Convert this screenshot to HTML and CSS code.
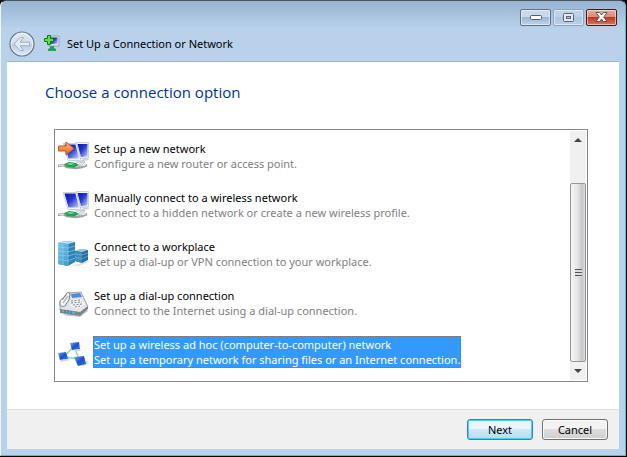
FILE: index.html
```
<!DOCTYPE html>
<html lang="en">
<head>
  <meta charset="UTF-8">
  <title>Set Up a Connection or Network</title>
  <link rel="stylesheet" href="styles.css">
</head>
<body>
  <!-- shared icon artwork -->
  <svg class="defs" width="0" height="0" aria-hidden="true">
    <defs>
      <linearGradient id="screen" x1="0" y1="0" x2="1" y2="1">
        <stop offset="0" stop-color="#0a16a0"/>
        <stop offset=".45" stop-color="#2336d2"/>
        <stop offset="1" stop-color="#c4d2fc"/>
      </linearGradient>
      <linearGradient id="orange" x1="0" y1="0" x2="0" y2="1">
        <stop offset="0" stop-color="#ffb67c"/>
        <stop offset="1" stop-color="#e8641a"/>
      </linearGradient>
      <linearGradient id="tower" x1="0" y1="0" x2="1" y2="1">
        <stop offset="0" stop-color="#7cc8ec"/>
        <stop offset="1" stop-color="#3c96cc"/>
      </linearGradient>
      <linearGradient id="node" x1="0" y1="0" x2="1" y2="1">
        <stop offset="0" stop-color="#7fb0f4"/>
        <stop offset=".5" stop-color="#1c50cc"/>
        <stop offset="1" stop-color="#3c76dc"/>
      </linearGradient>
      <linearGradient id="disc" x1="0" y1="0" x2="0" y2="1">
        <stop offset="0" stop-color="#dfe8f2"/>
        <stop offset=".48" stop-color="#d0dcea"/>
        <stop offset=".52" stop-color="#bccbdd"/>
        <stop offset="1" stop-color="#dde9f5"/>
      </linearGradient>
      <g id="computers">
        <path d="M18 2.500h12.500V18l-8 .5z" fill="#f0f2f8" stroke="#c4c8d6" stroke-width=".8"/>
        <path d="M19.500 4h10v12.500l-6.500.5z" fill="url(#screen)"/>
        <path d="M24 18h6l1 2-6 1z" fill="#cfd2d8"/>
        <path d="M5 3.500h13.500l4.500 17H10z" fill="#f4f6fb" stroke="#c0c5d4" stroke-width=".8"/>
        <path d="M6.500 4.500h11l3.500 14H10.500z" fill="url(#screen)"/>
        <path d="M17 21l8-1 2 2-8 1z" fill="#d2d5da"/>
        <path d="M0 26l5-1 4 2 9 1 6-1 5-2" fill="none" stroke="#9aa2a2" stroke-width="2.500"/>
        <path d="M1 25.500l5-.5M22 26l6-1" stroke="#eef1f1"/>
        <path d="M6 24l5-2 7 1 3 2-5 2.500-7-.5z" fill="#1ea352"/>
        <path d="M8 24l4-1 5 1-4 1z" fill="#7bdb9a"/>
        <path d="M20 25l5-4 2 1-4 4z" fill="#e5e9e9" stroke="#a0a8a8" stroke-width=".6"/>
      </g>
    </defs>
  </svg>

  <div class="window">
    <div class="caption">
      <div class="caption-buttons">
        <button class="cap-btn" aria-label="Minimize">
          <svg width="12" height="6" viewBox="0 0 12 6"><rect x=".5" y=".5" width="11" height="4" rx="1" fill="#fff" stroke="#565c6c"/></svg>
        </button>
        <button class="cap-btn cap-max" aria-label="Maximize" disabled>
          <svg width="11" height="10" viewBox="0 0 11 10"><rect x=".5" y=".5" width="10" height="8" rx="1" fill="#e4ebf4" stroke="#596277"/><rect x="3.500" y="3.500" width="4" height="2" fill="#b4c9e1" stroke="#596277"/></svg>
        </button>
        <button class="cap-btn cap-close" aria-label="Close">
          <svg width="13" height="11" viewBox="0 0 13 11"><path d="M1 .5h3.500l2 2.500 2-2.500H12L8.700 5l3.300 4.500H8.500l-2-2.500-2 2.500H1L4.300 5z" fill="#fff" stroke="#5b4448" stroke-width=".9"/></svg>
        </button>
      </div>
    </div>

    <div class="title-row">
      <button class="back" aria-label="Back" disabled>
        <svg width="26" height="26" viewBox="0 0 26 26">
          <circle cx="13" cy="13" r="12" fill="url(#disc)" stroke="#68778c" stroke-width="1.200"/>
          <circle cx="13" cy="13" r="10.800" fill="none" stroke="#f4f8fc" stroke-width=".8"/>
          <path d="M5 13l6.500-6.500h3L11 11.200h9.500v3.600H11l3.500 4.700h-3z" fill="#e3ebf4" stroke="#98a9bf" stroke-width=".9"/>
        </svg>
      </button>
      <svg class="title-icon" width="16" height="17" viewBox="0 0 16 17" aria-hidden="true">
        <path d="M3 1h12v10H5z" fill="#dce4e8" stroke="#8b97a3" stroke-width=".8"/>
        <path d="M6 2.500h7.500V9H6z" fill="url(#screen)"/>
        <path d="M0 15.500h16" stroke="#c4d0d2" stroke-width="2"/>
        <path d="M6 11h4v2l2 1v2H4v-2l2-1z" fill="#1aa660"/>
        <path d="M3.500.5h3v3h3v3h-3v3h-3v-3h-3v-3h3z" fill="#5ee33c" stroke="#0b7d19"/>
      </svg>
      <span class="title">Set Up a Connection or Network</span>
    </div>

    <div class="client">
      <div class="content">
        <h1>Choose a connection option</h1>
        <div class="list-box">
          <ul class="options">
            <li>
              <button class="option">
                <svg class="icon" viewBox="0 0 32 32">
                  <use href="#computers"/>
                  <path d="M.5 6H8V2l8 6.500L8 15v-4H.5z" fill="url(#orange)" stroke="#c05a20"/>
                </svg>
                <span class="text"><span class="name">Set up a new network</span><span class="desc">Configure a new router or access point.</span></span>
              </button>
            </li>
            <li>
              <button class="option">
                <svg class="icon" viewBox="0 0 32 32"><use href="#computers"/></svg>
                <span class="text"><span class="name">Manually connect to a wireless network</span><span class="desc">Connect to a hidden network or create a new wireless profile.</span></span>
              </button>
            </li>
            <li>
              <button class="option">
                <svg class="icon" viewBox="0 0 32 32">
                  <path d="M14 28l16-5 1 1-10 4z" fill="#dde1e4"/>
                  <path d="M17 13l6-2 7 1v10l-6 3-7-2z" fill="#2a6f9c"/>
                  <path d="M17 13l6-2 7 1-6 2z" fill="#9bd0ea"/>
                  <path d="M17 13l7 1v11l-7-2z" fill="#3f8fbc"/>
                  <path d="M17 16l7 1 6-2M17 19l7 2 6-3" stroke="#83bcd8" stroke-width=".6" fill="none"/>
                  <path d="M0 5l7-2 10 1v20l-7 4-10-2z" fill="#2f82b4"/>
                  <path d="M0 5l7-2 10 1-7 2z" fill="#b3e2f6"/>
                  <path d="M0 5l10 1v22L0 26z" fill="url(#tower)"/>
                  <path d="M0 9l10 1 7-2M0 13l10 1 7-2M0 17l10 1 7-2M0 21l10 2 7-3M5 6v21M10 6v22" stroke="#9cd2ec" stroke-width=".6" fill="none"/>
                </svg>
                <span class="text"><span class="name">Connect to a workplace</span><span class="desc">Set up a dial-up or VPN connection to your workplace.</span></span>
              </button>
            </li>
            <li>
              <button class="option">
                <svg class="icon" viewBox="0 0 32 32">
                  <path d="M4 28l18 2 8-6-2-2z" fill="#c6c8ca"/>
                  <path d="M9 6l14-1 7 15-8 6L2 23v-8z" fill="#e2e4e6" stroke="#8c9196" stroke-width=".8"/>
                  <path d="M2 22l20 3 8-6v3l-8 7-20-3z" fill="#7d858c"/>
                  <path d="M4 23l13 2v2L4 25z" fill="#62addc"/>
                  <path d="M7 23v3M10 23v3M13 24v3" stroke="#35546c" stroke-width=".7"/>
                  <path d="M13 7l9-1 2 4-10 1z" fill="#4b8ad6"/>
                  <path d="M12 13l12-1 3 6-9 4-6-3z" fill="#f1f2f3"/>
                  <path d="M13 14l10-1M13 16l11-1M15 18l9-1M17 20l5-1" stroke="#7c848c" stroke-width="1" stroke-dasharray="2 1.500"/>
                  <path d="M2 15c0-2 1-3 3-3l3-4c0-3 4-3 4-1l-1 6-3 4c0 3-5 3-6 1z" fill="#f6f7f8" stroke="#686e74" stroke-width=".9"/>
                  <path d="M5 16l5-7" stroke="#b5babf" stroke-width="1.500"/>
                </svg>
                <span class="text"><span class="name">Set up a dial-up connection</span><span class="desc">Connect to the Internet using a dial-up connection.</span></span>
              </button>
            </li>
            <li>
              <button class="option selected">
                <svg class="icon" viewBox="0 0 32 32">
                  <path d="M22 29l6-4 3 1-5 4z" fill="#d2d5d9"/>
                  <path d="M7 24l4-2 2 1-4 2z" fill="#dddfe3"/>
                  <path d="M16 10L6 21l15 2z" fill="none" stroke="#7ddf9c" stroke-width="1.300"/>
                  <path d="M12 7l9-1 1 7-8 1z" fill="url(#node)"/>
                  <path d="M14 14l8-1 1 2-7 0z" fill="#cbd8df"/>
                  <path d="M0 17l8-1 2 7-8 1z" fill="url(#node)"/>
                  <path d="M2 24l8-1 1 1-8 2z" fill="#cbd8df"/>
                  <path d="M16 21l10-1 2 8-8 2z" fill="url(#node)"/>
                </svg>
                <span class="text"><span class="name">Set up a wireless ad hoc (computer-to-computer) network</span><span class="desc">Set up a temporary network for sharing files or an Internet connection.</span></span>
              </button>
            </li>
          </ul>
          <div class="scrollbar">
            <button class="arrow" aria-label="Scroll up"><svg width="8" height="4" viewBox="0 0 8 4"><path d="M0 4l4-4 4 4z" fill="#444"/></svg></button>
            <div class="track"><div class="thumb"><span class="grip"></span></div></div>
            <button class="arrow" aria-label="Scroll down"><svg width="8" height="4" viewBox="0 0 8 4"><path d="M0 0h8L4 4z" fill="#444"/></svg></button>
          </div>
        </div>
      </div>
      <div class="footer">
        <button class="btn btn-default">Next</button>
        <button class="btn">Cancel</button>
      </div>
    </div>
  </div>
</body>
</html>
```
FILE: styles.css
```
* {
  box-sizing: border-box;
}

body {
  margin: 0;
  min-height: 100vh;
  display: flex;
  background: #000;
  font-family: "Noto Sans", "Open Sans", sans-serif;
  font-size: 11px;
  line-height: 15px;
  color: #000;
}

button {
  margin: 0;
  padding: 0;
  font: inherit;
  color: inherit;
  border: none;
  background: none;
}

.defs {
  position: absolute;
}

/* glass frame */
.window {
  flex: 1;
  display: flex;
  flex-direction: column;
  margin: 0 1px 1px 0;
  padding: 0 6px 6px;
  border: 1px solid #3fc4e0;
  border-left-color: #eef5fc;
  border-top-color: #4a5560;
  border-radius: 6px 6px 0 0;
  background: linear-gradient(#98b4d2 0, #b9d1ea 28px, #b9d1ea 100%);
}

.caption {
  display: flex;
  justify-content: flex-end;
  height: 27px;
  padding: 8px 2px 0 0;
}

.caption-buttons {
  display: flex;
  gap: 2px;
}

.cap-btn {
  display: flex;
  align-items: center;
  justify-content: center;
  width: 31px;
  height: 17px;
  border: 1px solid #5d7089;
  border-radius: 2px;
  box-shadow: inset 0 0 0 1px rgba(255, 255, 255, 0.5);
  background: linear-gradient(#c8d9eb 50%, #a0b9d3 50%, #bdd3e8);
}

.cap-max {
  border-color: #8ba4c0;
  background: linear-gradient(#bed2e7 50%, #adc6df 50%, #b9d0e8);
}

.cap-close {
  border-color: #4c1820;
  background: linear-gradient(#e9a99c, #dc8777 50%, #bc3b26 50%, #d4785e);
}

/* back button and wizard name */
.title-row {
  display: flex;
  align-items: center;
  height: 33px;
  padding: 0 0 2px 2px;
}

.back {
  width: 26px;
  height: 26px;
}

.back svg,
.title-icon {
  display: block;
}

.title-icon {
  margin: 0 7px 0 9px;
}

.client {
  flex: 1;
  display: flex;
  flex-direction: column;
  border-top: 1px solid #9db7d4;
  background: #fff;
}

.content {
  flex: 1;
  padding: 20px 31px 26px 38px;
}

h1 {
  margin: 0 0 27px;
  font-family: "Open Sans", "Noto Sans", sans-serif;
  font-size: 15px;
  line-height: 20px;
  font-weight: normal;
  color: #003399;
}

.list-box {
  display: flex;
  margin-left: 9px;
  padding: 1px;
  border: 1px solid #828790;
}

.options {
  flex: 1;
  display: flex;
  flex-direction: column;
  gap: 17px;
  margin: 0;
  padding: 9px 2px 12px;
  list-style: none;
}

.option {
  display: flex;
  align-items: center;
  gap: 4px;
  text-align: left;
  white-space: nowrap;
}

.icon {
  width: 32px;
  height: 32px;
}

.name,
.desc {
  display: block;
}

.desc {
  color: #808080;
}

.selected .text {
  margin: -1px;
  border: 1px dotted #cc6600;
  background: #3399ff;
}

.selected .name,
.selected .desc {
  color: #fff;
}

/* scrollbar */
.scrollbar {
  display: flex;
  flex-direction: column;
  width: 16px;
  background: #f0f0f0;
}

.arrow {
  display: flex;
  align-items: center;
  justify-content: center;
  height: 18px;
}

.track {
  flex: 1;
  display: flex;
  flex-direction: column;
  justify-content: flex-end;
}

.thumb {
  display: flex;
  align-items: center;
  justify-content: center;
  height: 84%;
  border: 1px solid #979797;
  border-radius: 2px;
  background: linear-gradient(90deg, #f6f6f6, #e6e6e8 45%, #c6c6ca 80%, #dcdcde);
}

.grip {
  width: 7px;
  height: 8px;
  background: repeating-linear-gradient(#555 0, #555 1px, #ddd 1px, #ddd 3px);
}

.footer {
  display: flex;
  justify-content: flex-end;
  gap: 9px;
  padding: 9px 11px;
  border-top: 1px solid #dfdfdf;
  background: #f0f0f0;
}

.btn {
  width: 66px;
  height: 21px;
  border: 1px solid #707070;
  border-radius: 3px;
  box-shadow: inset 0 0 0 1px #fafafa;
  background: linear-gradient(#f2f2f2 50%, #dddddd 50%, #cfcfcf);
}

.btn-default {
  border-color: #3c7fb1;
  box-shadow: inset 0 0 0 1px #48d1f5;
  background: linear-gradient(#ebf6fc 50%, #cfe9f7 50%, #b5dcf0);
}
```
